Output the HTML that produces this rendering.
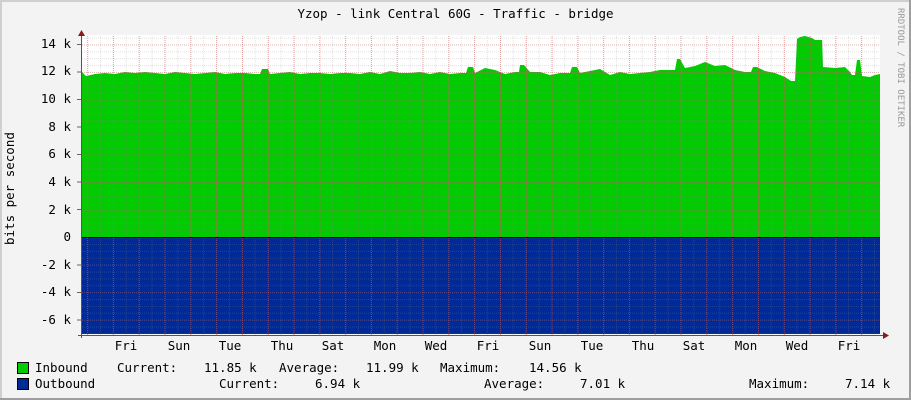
<!DOCTYPE html>
<html><head><meta charset="utf-8"><style>
*{margin:0;padding:0}
body{width:911px;height:400px;background:#f3f3f3;position:relative;overflow:hidden;font-family:"DejaVu Sans Mono","Liberation Mono",monospace;font-size:12.5px;color:#000}
.t{position:absolute;white-space:pre;line-height:14px}
.yl{position:absolute;right:840px;white-space:pre;line-height:14px}
.xl{position:absolute;top:339px;white-space:pre;transform:translateX(-50%);line-height:14px}
</style></head><body>
<div style="position:absolute;left:0;top:0;width:911px;height:2px;background:#cfcfcf"></div>
<div style="position:absolute;left:0;top:0;width:2px;height:400px;background:#cfcfcf"></div>
<div style="position:absolute;left:0;bottom:0;width:911px;height:2px;background:#9e9e9e"></div>
<div style="position:absolute;right:0;top:0;width:2px;height:400px;background:#9e9e9e"></div>
<div class="t" style="left:0;width:911px;text-align:center;top:7px">Yzop - link Central 60G - Traffic - bridge</div>
<div class="t" style="left:893px;top:8px;font-size:9px;color:#999;writing-mode:vertical-rl">RRDTOOL / TOBI OETIKER</div>
<div class="t" style="left:3px;top:245px;transform:rotate(-90deg);transform-origin:0 0">bits per second</div>
<svg style="position:absolute;left:0;top:0" width="911" height="400">
<defs>
<pattern id="vmin" x="87" y="0" width="12.9" height="2" patternUnits="userSpaceOnUse"><rect x="0" y="0" width="1" height="1" fill="#888" fill-opacity="0.25"/></pattern>
<pattern id="vmaj" x="113" y="0" width="25.8" height="2" patternUnits="userSpaceOnUse"><rect x="0" y="0" width="1" height="1" fill="#e05050" fill-opacity="0.45"/></pattern>
<pattern id="hmin" x="0" y="237.1" width="2" height="6.88" patternUnits="userSpaceOnUse"><rect x="0" y="0" width="1" height="1" fill="#888" fill-opacity="0.25"/></pattern>
<pattern id="hmaj" x="0" y="237.1" width="2" height="27.52" patternUnits="userSpaceOnUse"><rect x="0" y="0" width="1" height="1" fill="#e05050" fill-opacity="0.3"/></pattern>
</defs>
<rect x="81" y="35" width="799" height="300" fill="#fff"/>
<path fill="#00cc00" d="M81,237 L81,71 86,76 95,74 105,73 115,74 125,72 135,73 145,72 155,73 165,74 175,72 185,73 195,74 205,73 215,72 225,74 235,73 245,73 255,74 260,74 262,69 268,69 270,74 280,73 290,72 300,74 310,73 320,73 330,74 340,73 350,73 360,74 370,72 380,74 390,71 400,73 410,73 420,72 430,74 440,72 450,74 460,73 466,73 468,67 473,67 475,73 485,68 495,70 505,74 515,72 519,72 520,65 524,65 530,72 540,72 550,75 560,73 570,73 572,67 577,67 580,73 590,71 600,69 610,75 620,72 630,74 640,73 650,72 660,70 670,70 675,70 677,59 680,59 685,68 695,66 705,62 715,66 725,65 735,70 745,72 751,72 753,67 757,67 765,71 775,73 785,77 791,81 795,81 797,39 800,37 805,36 812,38 815,40 822,40 823,67 835,68 845,67 850,72 852,75 855,75 857,60 860,60 862,76 870,77 875,75 880,74 L880,237 Z"/>
<rect x="81" y="237" width="799" height="97" fill="#002a97"/>
<rect x="82" y="36" width="798" height="299" fill="url(#vmin)"/>
<rect x="82" y="36" width="798" height="299" fill="url(#hmin)"/>
<rect x="82" y="36" width="798" height="299" fill="url(#vmaj)"/>
<rect x="82" y="36" width="798" height="299" fill="url(#hmaj)"/>
<g stroke="#666">
<line x1="77" x2="81" y1="44.5" y2="44.5"/><line x1="77" x2="81" y1="72" y2="72"/><line x1="77" x2="81" y1="99.5" y2="99.5"/><line x1="77" x2="81" y1="127" y2="127"/><line x1="77" x2="81" y1="154.5" y2="154.5"/><line x1="77" x2="81" y1="182" y2="182"/><line x1="77" x2="81" y1="209.5" y2="209.5"/><line x1="77" x2="81" y1="265" y2="265"/><line x1="77" x2="81" y1="292.5" y2="292.5"/><line x1="77" x2="81" y1="320" y2="320"/>
</g>
<line x1="81" x2="880" y1="237.5" y2="237.5" stroke="#000"/>
<line x1="81.5" x2="81.5" y1="33" y2="338" stroke="#555"/>
<line x1="78" x2="884" y1="335.5" y2="335.5" stroke="#555"/>
<path d="M78,36 L81.5,30 85,36 Z" fill="#8b1a1a"/>
<path d="M883,332 L889,335.5 883,339 Z" fill="#8b1a1a"/>
<rect x="17.5" y="362.5" width="11" height="11" fill="#00cc00" stroke="#000"/>
<rect x="17.5" y="378.5" width="11" height="11" fill="#002a97" stroke="#000"/>
</svg>
<div class="yl" style="top:37px">14 k</div>
<div class="yl" style="top:64px">12 k</div>
<div class="yl" style="top:92px">10 k</div>
<div class="yl" style="top:120px">8 k</div>
<div class="yl" style="top:147px">6 k</div>
<div class="yl" style="top:175px">4 k</div>
<div class="yl" style="top:203px">2 k</div>
<div class="yl" style="top:230px">0</div>
<div class="yl" style="top:258px">-2 k</div>
<div class="yl" style="top:285px">-4 k</div>
<div class="yl" style="top:313px">-6 k</div>
<div class="xl" style="left:126px">Fri</div>
<div class="xl" style="left:179px">Sun</div>
<div class="xl" style="left:230px">Tue</div>
<div class="xl" style="left:282px">Thu</div>
<div class="xl" style="left:333px">Sat</div>
<div class="xl" style="left:385px">Mon</div>
<div class="xl" style="left:436px">Wed</div>
<div class="xl" style="left:488px">Fri</div>
<div class="xl" style="left:540px">Sun</div>
<div class="xl" style="left:592px">Tue</div>
<div class="xl" style="left:643px">Thu</div>
<div class="xl" style="left:694px">Sat</div>
<div class="xl" style="left:746px">Mon</div>
<div class="xl" style="left:797px">Wed</div>
<div class="xl" style="left:849px">Fri</div>
<div class="t" style="left:35px;top:361px">Inbound</div>
<div class="t" style="left:117px;top:361px">Current:</div>
<div class="t" style="left:204px;top:361px">11.85 k</div>
<div class="t" style="left:279px;top:361px">Average:</div>
<div class="t" style="left:366px;top:361px">11.99 k</div>
<div class="t" style="left:440px;top:361px">Maximum:</div>
<div class="t" style="left:529px;top:361px">14.56 k</div>
<div class="t" style="left:35px;top:377px">Outbound</div>
<div class="t" style="left:219px;top:377px">Current:</div>
<div class="t" style="left:315px;top:377px">6.94 k</div>
<div class="t" style="left:484px;top:377px">Average:</div>
<div class="t" style="left:580px;top:377px">7.01 k</div>
<div class="t" style="left:749px;top:377px">Maximum:</div>
<div class="t" style="left:845px;top:377px">7.14 k</div>
</body></html>
